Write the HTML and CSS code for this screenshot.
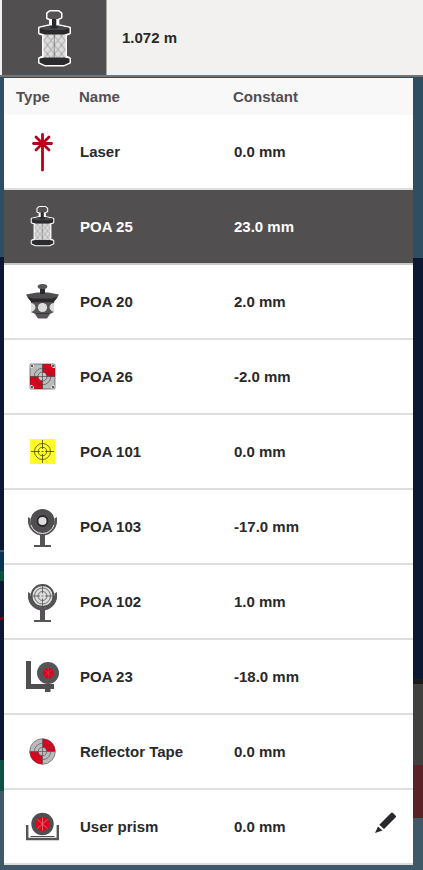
FILE: index.html
```html
<!DOCTYPE html>
<html lang="en">
<head>
<meta charset="utf-8">
<meta name="viewport" content="width=device-width, initial-scale=1">
<title>Reflector selection</title>
<link rel="stylesheet" href="styles.css">
</head>
<body>
<svg class="defs" aria-hidden="true">
  <defs>
    <pattern id="mesh" width="7" height="9" patternUnits="userSpaceOnUse" x="3.5">
      <rect width="7" height="9" fill="#dcdcdc"/>
      <path d="M0 0L7 9M7 0L0 9" stroke="#929292" stroke-width=".8"/>
    </pattern>
    <symbol id="prism" viewBox="0 0 35 58">
      <path d="M13.500 10L10.500 9V4.500L13 2.500H21.500L24 4.500V8.500L20.800 10V16.500L32.500 19V24L28.500 25.500V47.500L32.500 49.500V53.500L27 56H8L2.500 53.500V49.500L6.500 47.500V25.500L2.500 24V19L13.500 16.500Z" fill="#29292b" stroke="#fff" stroke-width="3" stroke-linejoin="round"/>
      <path d="M10.500 9V4.500L13 2.500H21.500L24 4.500V8.500L20.800 10H13.500Z" fill="#555254"/>
      <path d="M6.500 25H28.500V49H6.500Z" fill="url(#mesh)"/>
      <path d="M17.300 25V49" stroke="#777" stroke-width=".8"/>
      <path d="M2.500 19L13.500 16.500H20.800L32.500 19V24L27 25.500H8L2.500 24Z" fill="#2b2b2d"/>
      <path d="M2.500 19L13.500 16.500V19.500H20.800V16.500L32.500 19L27 21H8Z" fill="#49474a"/>
      <path d="M2.500 49.500L8 48.500H27L32.500 49.500V53.500L27 56H8L2.500 53.500Z" fill="#2b2b2d"/>
    </symbol>
  </defs>
</svg>
<header class="bar">
  <button class="tile" type="button" aria-label="Reflector"><svg class="tile-icon"><use href="#prism"/></svg></button>
  <span class="height">1.072 m</span>
</header>
<main class="map">
  <table class="list">
    <thead>
      <tr><th class="type">Type</th><th class="name">Name</th><th class="constant">Constant</th><th class="action"></th></tr>
    </thead>
    <tbody>
      <tr>
        <td><svg class="icon" viewBox="0 0 46 53"><g stroke="#b5001b" stroke-width="2.8" stroke-linecap="round"><path d="M23.500 9.500V45M14.500 18.500H32.500M17 12L30 25M30 12L17 25"/></g></svg></td>
        <td>Laser</td><td>0.0 mm</td><td></td>
      </tr>
      <tr class="selected">
        <td><svg class="icon" viewBox="0 0 46 53"><use href="#prism" x="11" y="5" width="25" height="42"/></svg></td>
        <td>POA 25</td><td>23.0 mm</td><td></td>
      </tr>
      <tr>
        <td><svg class="icon" viewBox="0 0 46 53">
          <path d="M12 26H35V37L31 39L28 43.500H19L16 39L12 37Z" fill="#575557"/>
          <path d="M7 19.500L18 17.500H29L40 19.500L38 23L34.500 27H12.500L9 23Z" fill="#504e50"/>
          <path d="M8.500 22L14 23.500H33L38.500 22L34.500 27.200H12.500Z" fill="#29292b"/>
          <path d="M21 12H26V19H21Z" fill="#29292b"/><ellipse cx="23.500" cy="11.500" rx="4.800" ry="2.600" fill="#575557"/>
          <circle cx="23.500" cy="32.500" r="4.600" fill="#ddd"/>
          <path d="M12 28C18 29 18 35.500 12 37ZM35 28C29 29 29 35.500 35 37Z" fill="#ddd"/>
          <path d="M17 38.500H30" stroke="#343436"/></svg></td>
        <td>POA 20</td><td>2.0 mm</td><td></td>
      </tr>
      <tr>
        <td><svg class="icon" viewBox="0 0 46 53">
          <rect x="11" y="14" width="25" height="25" fill="#bbb"/>
          <path d="M23.500 14H36V26.500H23.500ZM11 26.500H23.500V39H11Z" fill="#df001b"/>
          <circle cx="23.500" cy="26.500" r="4.300" fill="#c4c4c4"/>
          <path d="M11 14H15V16L13 18H11ZM36 14V18H34L32 16V14ZM11 39V35H13L15 37V39ZM36 39H32V37L34 35H36Z" fill="#eee"/>
          <g fill="none" stroke="#3c393b" stroke-opacity=".75" stroke-width=".8"><rect x="11" y="14" width="25" height="25" rx="1"/><circle cx="23.500" cy="26.500" r="8.300"/><circle cx="23.500" cy="26.500" r="4.500"/><path d="M11 26.500H36M23.500 14V39"/></g>
          <g fill="#29292b"><circle cx="13" cy="16" r="1"/><circle cx="34" cy="16" r="1"/><circle cx="13" cy="37" r="1"/><circle cx="34" cy="37" r="1"/></g>
        </svg></td>
        <td>POA 26</td><td>-2.0 mm</td><td></td>
      </tr>
      <tr>
        <td><svg class="icon" viewBox="0 0 46 53"><rect x="11" y="14" width="25" height="25" fill="#ffff27"/>
          <g fill="none" stroke="#45451c" stroke-width=".8"><circle cx="23.500" cy="26.500" r="8"/><circle cx="23.500" cy="26.500" r="4.300"/><path d="M12 26.500H21M26 26.500H35M23.500 15V24M23.500 29V38M22.500 26.500H24.500"/></g></svg></td>
        <td>POA 101</td><td>0.0 mm</td><td></td>
      </tr>
      <tr>
        <td><svg class="icon" viewBox="0 0 46 53">
          <path d="M9 17L11.500 18.500V25H10L9 22ZM38 17L35.500 18.500V25H37L38 22Z" fill="#565456"/>
          <path d="M10.200 21A13.300 13.300 0 0 0 36.800 21" fill="none" stroke="#565456" stroke-width="2.200"/>
          <circle cx="23.500" cy="21" r="12" fill="#504e50"/><path d="M12 25A12 12 0 0 0 35 25" fill="none" stroke="#ddd"/>
          <circle cx="23.500" cy="21" r="5" fill="#ddd" stroke="#29292b" stroke-width="1.800"/>
          <path d="M21 34H26V45H32V47H15V45H21Z" fill="#565456"/></svg></td>
        <td>POA 103</td><td>-17.0 mm</td><td></td>
      </tr>
      <tr>
        <td><svg class="icon" viewBox="0 0 46 53">
          <path d="M9 17L11.500 18.500V25H10L9 22ZM38 17L35.500 18.500V25H37L38 22Z" fill="#565456"/>
          <path d="M10.500 21A13 13 0 0 0 36.500 21" fill="none" stroke="#565456" stroke-width="3"/>
          <circle cx="23.500" cy="21" r="11" fill="#ddd" stroke="#504e50" stroke-width="1.800"/>
          <g fill="none" stroke="#565456" stroke-width=".8"><circle cx="23.500" cy="21" r="8"/><circle cx="23.500" cy="21" r="4.500"/><path d="M13 21H21M26 21H34M23.500 11V18.500M23.500 23.500V31M22.500 21H24.500"/></g>
          <path d="M21 34H26V45H32V47H15V45H21Z" fill="#565456"/></svg></td>
        <td>POA 102</td><td>1.0 mm</td><td></td>
      </tr>
      <tr>
        <td><svg class="icon" viewBox="0 0 46 53">
          <path d="M7 11H12V34H35V39H31.500V42H26V39H7Z" fill="#504e50"/>
          <circle cx="29" cy="23" r="11" fill="#565456"/><circle cx="29.300" cy="23" r="5.300" fill="#df001b"/>
          <path d="M29.300 18V28M25.500 20L33 26M33 20L25.500 26" stroke="#ba4050" stroke-width=".8"/></svg></td>
        <td>POA 23</td><td>-18.0 mm</td><td></td>
      </tr>
      <tr>
        <td><svg class="icon" viewBox="0 0 46 53"><circle cx="23.500" cy="26.500" r="12.800" fill="#bbb"/>
          <path d="M23.500 26.500V13.700A12.800 12.800 0 0 1 36.300 26.500ZM23.500 26.500V39.300A12.800 12.800 0 0 1 10.700 26.500Z" fill="#df001b"/>
          <circle cx="23.500" cy="26.500" r="4.200" fill="#bbb"/>
          <g fill="none" stroke="#514e50" stroke-opacity=".8" stroke-width=".8"><circle cx="23.500" cy="26.500" r="12.800"/><circle cx="23.500" cy="26.500" r="8.200"/><circle cx="23.500" cy="26.500" r="4.200"/><path d="M11 26.500H36M23.500 14V39"/></g></svg></td>
        <td>Reflector Tape</td><td>0.0 mm</td><td></td>
      </tr>
      <tr>
        <td><svg class="icon" viewBox="0 0 46 53">
          <path d="M8.200 25V39H38.800V25" fill="none" stroke="#565456" stroke-width="2.400"/><path d="M11.500 36.500H35.500" stroke="#514e50"/>
          <circle cx="23.500" cy="24" r="11.200" fill="#504e50"/><circle cx="23.500" cy="24" r="7" fill="#df001b"/>
          <path d="M23.500 17.500V30.500M18.500 19.500L28.500 28.500M28.500 19.500L18.500 28.500" stroke="#df7580" stroke-width=".8"/></svg></td>
        <td>User prism</td><td>0.0 mm</td>
        <td><button class="edit" type="button" aria-label="Edit User prism"><svg viewBox="0 0 22 22" width="22" height="22"><path d="M5.300 12.700L17 1Q18 0 19 1L21.500 3.500Q22.500 4.500 21.500 5.500L10 17ZM4 14.500L8.500 18.500L1 21Z" fill="#29292b"/></svg></button></td>
      </tr>
    </tbody>
  </table>
</main>
</body>
</html>
```

FILE: styles.css
```css
* {
  box-sizing: border-box;
}

body {
  margin: 0;
  min-height: 100vh;
  display: flex;
  flex-direction: column;
  background: #405969;
  color: #29292b;
  font: bold 15px/20px "Liberation Sans", Arial, sans-serif;
}

.defs {
  position: absolute;
  width: 0;
  height: 0;
}

button {
  padding: 0;
  border: 0;
  font: inherit;
  color: inherit;
  background: none;
}

.bar {
  display: flex;
  align-items: center;
  gap: 15px;
  padding-left: 2px;
  background: #f3f1ef;
  border-bottom: 2px solid #77736e;
}

.tile {
  display: flex;
  align-items: center;
  justify-content: center;
  width: 105px;
  height: 75px;
  background: #524f51;
  border-right: 1px solid #aaa7a4;
}

.tile-icon {
  width: 35px;
  height: 58px;
}

.map {
  flex: 1;
  padding: 1px 10px 0 4px;
  /* Map strips visible on either side of the list. */
  background:
    linear-gradient(#2f4b60 0 1px, transparent 1px),
    linear-gradient(#2f4e62 180px, #0c1731 180px 473px, #405969 473px 475px, #063654 475px 494px, #0d5140 494px 504px, #0c1731 504px 540px, #790713 540px 543px, #0c1731 543px 683px, #0d5140 683px 714px, #405969 714px) left / 4px 100% no-repeat,
    linear-gradient(#2f4e62 181px, #0c1731 181px 602px, #1c1c1b 602px 607px, #40403e 607px 688px, #582226 688px 741px, #405969 741px) right / 10px 100% no-repeat;
}

.list {
  width: 100%;
  table-layout: fixed;
  border-collapse: separate;
  border-spacing: 0;
  background: #fff;
}

th {
  height: 37px;
  padding: 0;
  text-align: left;
  color: #524f51;
  background: #f8f8f8;
}

.type {
  width: 75px;
  padding-left: 12px;
}

.name {
  width: 154px;
}

.action {
  width: 56px;
}

td {
  height: 75px;
  padding: 0 0 0 1px;
  border-bottom: 2px solid #dedede;
}

td:first-child {
  padding-left: 15px;
}

td:last-child {
  padding-right: 17px;
}

.selected td {
  color: #fff;
  background: #524f51;
  border-bottom-color: #c9c8c9;
}

.icon {
  display: block;
  width: 46px;
  height: 53px;
}

.edit {
  display: block;
  margin: 0 0 8px auto;
}

.edit svg {
  display: block;
}
```
